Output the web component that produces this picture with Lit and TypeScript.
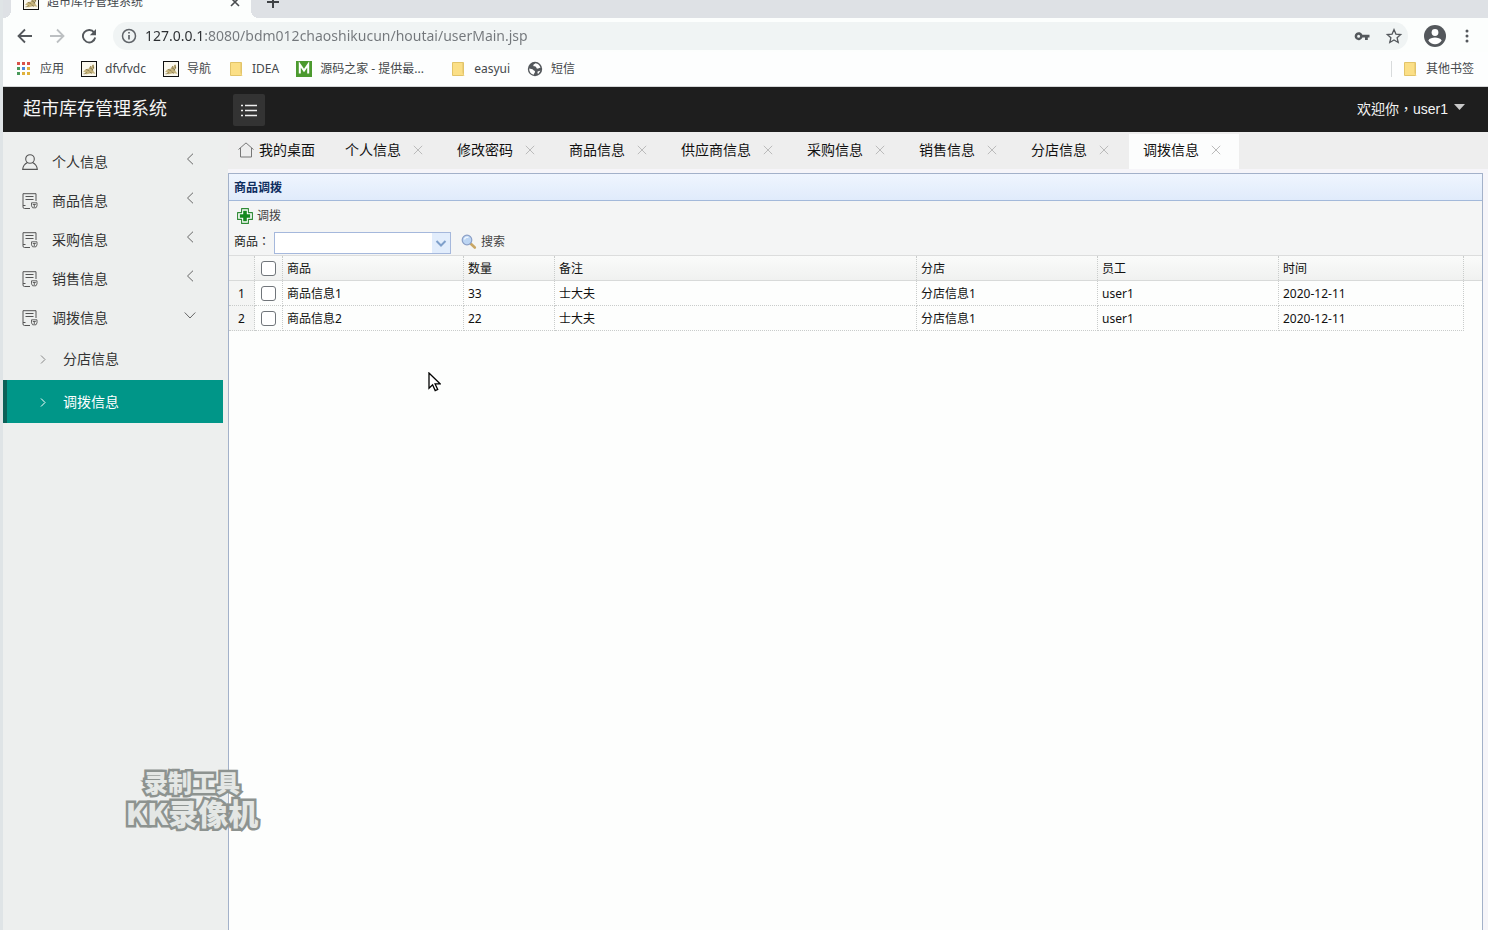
import { LitElement, html, css, svg, nothing } from "lit";
import { customElement, state } from "lit/decorators.js";
import { classMap } from "lit/directives/class-map.js";

const cat = html`<svg class="i16" viewBox="0 0 16 16" aria-hidden="true">
  <rect x="0.5" y="0.5" width="15" height="15" fill="#faf8ee" stroke="#111" />
  <path d="M2 11 4.500 8.200l3.600-.6 1.200-2.800 1 1 1.500-2.400 1 .3.500 3.600-1.300 1.500.6 1.500 1.900 2.400-3.400-.4-2.400.2-2.800.8L3.500 13l1.200-1.700z" fill="#c6b47c" />
  <path d="M2.500 12.800c1.500.2 2.200-.8 3.500-1.300M8.500 10.800l2.500 1.600M9.600 5.200l-.8 2.400M11.800 4l.7 2.500M5 8.400l3.200 1.200" fill="none" stroke="#85754a" stroke-width=".8" />
  <path d="M9.600 7.400h1M11.900 6.800h.9M10.700 8.800h1.300" stroke="#4a4330" stroke-width=".8" />
</svg>`;

const folder = html`<svg class="i16" viewBox="0 0 16 16" aria-hidden="true">
  <path d="M2.500 1.500h11v13h-11z" fill="#fbdf86" stroke="#e2c469" />
  <path d="M12.500 2v9.500l1.500 3" fill="none" stroke="#edd079" />
</svg>`;

const appsColors = ["#d9534a", "#d9534a", "#d9534a", "#4a9a5b", "#4a86d9", "#e0b23c", "#4a9a5b", "#e0b23c", "#e0b23c"];
const apps = html`<svg class="i16" viewBox="0 0 16 16" aria-hidden="true">
  ${appsColors.map((c, i) => svg`<rect x=${1 + (i % 3) * 5} y=${1 + Math.floor(i / 3) * 5} width="3" height="3" fill=${c} />`)}
</svg>`;

const mark = html`<svg class="i16" viewBox="0 0 16 16" aria-hidden="true">
  <rect width="16" height="16" fill="#4c9a2f" />
  <path d="M3.800 12.500v-9l4.200 6 4.200-6v9" fill="none" stroke="#fff" stroke-width="2" />
</svg>`;

const globe = html`<svg class="i16" viewBox="0 0 16 16" aria-hidden="true">
  <circle cx="8" cy="8" r="7.200" fill="#54585c" />
  <path d="M2.200 7.500C3.500 8 5.500 7.800 6.300 9s1.700.3 1.700 1.800-1 1.200-1.300 3C4 13 2 11 2.200 7.500zM8.500 2.200c-.6 1-2.500.8-2.200 2.300s1.700.6 2.600 1.200-.2 1.600 1.300 1.900 1.600-1.100 3.300-.8C13 4.500 11.200 2.600 8.500 2.200zM11 10.200c1 .2 1.600-.4 2.300-.6-.3 1.300-1.200 2.500-2.300 3.300-.6-1-.8-2 0-2.700z" fill="#fff" />
</svg>`;

const userIcon = html`<svg class="i16" viewBox="0 0 16 16" aria-hidden="true" fill="none" stroke="#555" stroke-width="1.100">
  <circle cx="8" cy="5" r="4.300" />
  <path d="M5.500 8.600C3 9.800 1 12 .7 15.400h14.600C15 12 13 9.800 10.500 8.600" />
</svg>`;

const formIcon = html`<svg class="i16" viewBox="0 0 16 16" aria-hidden="true" fill="none" stroke="#555">
  <path d="M8 15.500H2.500a1.500 1.500 0 0 1-1.500-1.500V.7h13V8M3.500 3.500h8M3.500 6.500h8M1 12.500h2.500" />
  <path d="M9.500 9.800h5.500v3l-1 2h-3.400l-1.100-2zM10.800 11.500h3M12.300 11.500v2.500" stroke-width=".9" />
</svg>`;

const chevron = (d: string) => html`<svg class="i12" viewBox="0 0 12 12" aria-hidden="true" fill="none" stroke="currentColor"><path d=${d} /></svg>`;
const LEFT = "M9 .7 3.500 6 9 11.300";
const DOWN = "M.7 3.500 6 9l5.300-5.500";
const RIGHT = "M4 2.500 8 6.500 4 10.500";

const bookmarks = [
  { icon: apps, text: "应用" },
  { icon: cat, text: "dfvfvdc" },
  { icon: cat, text: "导航" },
  { icon: folder, text: "IDEA" },
  { icon: mark, text: "源码之家 - 提供最...", wide: true },
  { icon: folder, text: "easyui" },
  { icon: globe, text: "短信" },
];

const menu = [
  { text: "个人信息", icon: userIcon },
  { text: "商品信息", icon: formIcon },
  { text: "采购信息", icon: formIcon },
  { text: "销售信息", icon: formIcon },
  { text: "调拨信息", icon: formIcon, children: ["分店信息", "调拨信息"] },
];

const tabs = ["个人信息", "修改密码", "商品信息", "供应商信息", "采购信息", "销售信息", "分店信息", "调拨信息"];
const columns = ["商品", "数量", "备注", "分店", "员工", "时间"];
const rows = [
  ["商品信息1", "33", "士大夫", "分店信息1", "user1", "2020-12-11"],
  ["商品信息2", "22", "士大夫", "分店信息1", "user1", "2020-12-11"],
];

@customElement("app-root")
export class AppRoot extends LitElement {
  static styles = css`
    :host {
      display: flex;
      flex-direction: column;
      position: relative;
      box-sizing: border-box;
      min-height: 100vh;
      padding-left: 3px;
      background: #dfe4e6;
      color: #222;
      font: 12px/16px "Noto Sans", "Noto Sans CJK SC", sans-serif;
      overflow: hidden;
    }
    *, *::before, *::after { box-sizing: border-box; }
    button, input, select { font: inherit; color: inherit; margin: 0; padding: 0; border: 0; background: none; }
    a { color: inherit; text-decoration: none; }
    button { display: flex; align-items: center; cursor: pointer; white-space: nowrap; }
    svg { display: block; flex: none; }
    .i16 { width: 16px; height: 16px; }
    .i12 { width: 12px; height: 12px; }

    .strip { display: flex; align-items: flex-end; height: 18px; overflow: hidden; background: #dee1e5; }
    .corner { width: 8px; height: 8px; background: radial-gradient(circle at 0 0, transparent 8px, #fcfefd 8px); }
    .corner-right { background: radial-gradient(circle at 100% 0, transparent 8px, #fcfefd 8px); }
    .page-tab { display: flex; align-items: center; gap: 8px; width: 240px; height: 34px; padding: 2px 10px 0 12px; background: #fcfefd; color: #45494d; }
    .page-tab .label { flex: 1; }
    .new-tab { width: 20px; height: 34px; margin-left: 4px; padding-top: 2px; }
    .toolbar { display: flex; align-items: center; height: 34px; padding: 2px 13px 0 14px; gap: 16px; background: #fcfefd; }
    .address { display: flex; flex: 1; align-items: center; height: 28px; padding: 0 0 0 8px; gap: 8px; border-radius: 14px; background: #f0f4f4; }
    .nav { display: flex; gap: 16px; }
    .url { flex: 1; min-width: 0; height: 24px; font-size: 14px; line-height: 24px; outline: 0; color: transparent; background: linear-gradient(90deg, #2b2e31 60px, #73777b 60px); -webkit-background-clip: text; background-clip: text; }
    .right { display: flex; align-items: center; gap: 8px; }
    .bookmarks { display: flex; align-items: center; height: 35px; padding: 0 14px 0 13px; gap: 17px; background: #fdfefe; border-bottom: 1px solid #d5d7d8; color: #45484b; }
    .bookmark { display: flex; align-items: center; gap: 8px; white-space: nowrap; }
    .wide { width: 137px; }
    .other { margin-left: auto; padding-left: 10px; border-left: 1px solid #d8dbdc; }

    .header { display: flex; align-items: center; height: 45px; padding: 0 23px 0 20px; background: #1e1e1e; color: #f4f4f4; }
    .brand { width: 210px; margin: 0; padding-bottom: 4px; font-size: 18px; line-height: 24px; font-weight: 400; }
    .toggle { justify-content: center; width: 32px; height: 32px; border-radius: 2px; background: #333; }
    .user { margin-left: auto; padding-bottom: 2px; gap: 6px; font-family: "Liberation Sans", "Noto Sans CJK TC", sans-serif; font-size: 14px; line-height: 20px; }

    .body { display: flex; flex: 1; }
    .side { flex: none; width: 225px; padding: 10px 5px 0 0; background: #edefee; color: #333; font-size: 14px; line-height: 20px; }
    .group, .sub { display: flex; align-items: center; width: 100%; }
    .group { height: 39px; padding: 0 27px 0 19px; gap: 14px; }
    .group .label { flex: 1; text-align: left; }
    .group .arrow { padding-bottom: 5px; color: #666; }
    .sub { height: 43px; padding-left: 34px; gap: 14px; }
    .sub .arrow { color: #888; }
    .current { padding-left: 30px; border-left: 4px solid #0b6158; background: #009688; color: #fff; }
    .current .arrow { color: #fff; }

    .main { display: flex; flex: 1; flex-direction: column; min-width: 0; background: #f6f5f9; }
    .tabs { display: flex; height: 37px; padding-top: 2px; background: #eeeeee; color: #111; font-size: 14px; line-height: 20px; }
    .tab { display: flex; align-items: center; height: 35px; margin-right: 2px; padding: 0 18px 3px 14px; gap: 12px; }
    .home { padding: 0 14px 3px 10px; }
    .home button { gap: 5px; }
    .active { background: #fcfdfd; }
    .close { color: #bbb; }

    .panel { display: flex; flex: 1; flex-direction: column; margin: 4px 5px 0 0; border: 1px solid #a3b1c9; border-bottom: 0; background: #fdfefd; }
    .panel-title { height: 27px; margin: 0; padding: 6px 5px 4px; border-bottom: 1px solid #a3b9da; background: linear-gradient(#eff5fe, #e0ebfb); color: #0e2d5f; font-size: 12px; line-height: 16px; font-weight: 700; }
    .tools { padding: 2px 5px 1px; background: #f4f5f5; }
    .tool-row { display: flex; align-items: center; height: 24px; }
    .tool { padding-top: 2px; gap: 4px; color: #444; }
    .add { margin-left: 3px; }
    .search { margin-left: 10px; }
    .query { height: 27px; padding-top: 1px; }
    .query label { width: 40px; font-family: "Noto Sans CJK TC", sans-serif; }
    .combo { display: grid; align-self: flex-end; width: 177px; height: 22px; border: 1px solid #a5b8dc; background: #fff; }
    .combo select { grid-area: 1 / 1; appearance: none; width: 100%; outline: 0; }
    .combo .drop { grid-area: 1 / 1; justify-self: end; pointer-events: none; }

    .grid { display: block; color: #111; }
    .grid thead, .grid tbody { display: block; }
    .row { display: grid; grid-template-columns: 26px 28px 181fr 91fr 362fr 181fr 181fr 185fr 18px; height: 25px; }
    .head { height: 26px; border-top: 1px solid #dcdddd; border-bottom: 1px solid #d8dad9; background: linear-gradient(#fafbfa, #f0f1f0); }
    .cell { display: flex; align-items: center; min-width: 0; padding: 2px 4px 0; border: 0 dotted #c9cccb; border-width: 0 1px 1px 0; font-weight: 400; text-align: left; white-space: nowrap; }
    .head .cell { border-bottom: 0; }
    .cell:last-child { border: 0; }
    .num { justify-content: center; padding: 2px 0 0; background: #f4f5f4; }
    .pick { justify-content: center; padding: 0; }
    .check { width: 15px; height: 15px; appearance: none; border: 1px solid #70757a; border-radius: 3px; background: #fff; }
    .check:checked { background: #1a73e8; }

    .watermark { position: absolute; left: 124px; top: 766px; width: 136px; color: #e4e7e5; font: 900 24px/32px "Noto Sans CJK SC", sans-serif; text-align: center; -webkit-text-stroke: 5px #8d9390; stroke-linejoin: round; paint-order: stroke fill; pointer-events: none; }
    .watermark .big { display: block; margin-top: -2px; font-size: 30px; line-height: 32px; white-space: nowrap; }
    .cursor { position: absolute; left: 428px; top: 372px; width: 13px; height: 20px; pointer-events: none; }
  `;

  @state() private tab = "调拨信息";

  private chrome() {
    return html`
      <div class="strip">
        <span class="corner"></span>
        <div class="page-tab">${cat}<span class="label">超市库存管理系统</span>
          <button aria-label="关闭标签页"><svg class="i12" viewBox="0 0 12 12" stroke="#4a4d50" stroke-width="1.600"><path d="M2 2l8 8M10 2l-8 8" /></svg></button>
        </div>
        <span class="corner corner-right"></span>
        <button class="new-tab" aria-label="新标签页"><svg width="20" height="16" viewBox="0 0 20 16" stroke="#3f4245" stroke-width="2"><path d="M10 2v12M4 8h12" /></svg></button>
      </div>
      <div class="toolbar">
        <div class="nav">
          <button aria-label="后退"><svg class="i16" viewBox="0 0 16 16" fill="none" stroke="#54585c" stroke-width="1.800"><path d="M15 8H2M8 1.500 1.500 8 8 14.500" /></svg></button>
          <button aria-label="前进"><svg class="i16" viewBox="0 0 16 16" fill="none" stroke="#bcc0c2" stroke-width="1.800"><path d="M1 8h13M8 1.500 14.500 8 8 14.500" /></svg></button>
          <button aria-label="刷新"><svg class="i16" viewBox="0 0 16 16" fill="none" stroke="#54585c" stroke-width="1.900"><path d="M13.200 4.600A6.200 6.200 0 1 0 14.200 9.500" /><path d="M15 1v6.200H8.800z" fill="#54585c" stroke="none" /></svg></button>
        </div>
        <div class="address">
          <svg class="i16" viewBox="0 0 16 16" fill="none" stroke="#5f6368" stroke-width="1.500"><circle cx="8" cy="8" r="6.500" /><path d="M8 7v4.500M8 4v1.600" stroke-width="1.700" /></svg>
          <input class="url" type="text" aria-label="地址" .value=${"127.0.0.1:8080/bdm012chaoshikucun/houtai/userMain.jsp"} />
          <div class="right">
            <button aria-label="密码"><svg class="i16" viewBox="0 0 16 16"><path fill="#54585c" fill-rule="evenodd" d="M8.400 6.800A4 4 0 1 0 8.400 9.500H11V12h2.800V9.500H15.500V6.800zM4.600 6.700a1.500 1.500 0 1 1 0 3 1.500 1.500 0 0 1 0-3z" /></svg></button>
            <button aria-label="收藏"><svg width="30" height="16" viewBox="-8 0 30 16" fill="none" stroke="#54585c" stroke-width="1.300"><path d="M8 1.600l1.900 4.500 4.800.4-3.600 3.200 1.100 4.800L8 12l-4.200 2.500 1.100-4.800L1.300 6.500l4.800-.4z" /></svg></button>
          </div>
        </div>
        <button aria-label="用户"><svg width="22" height="22" viewBox="0 0 22 22"><circle cx="11" cy="11" r="11" fill="#54585c" /><circle cx="11" cy="7.500" r="3.400" fill="#fff" /><path d="M4.300 15.500c1-2.300 4.300-3 6.700-3s5.700.7 6.700 3a8 8 0 0 1-13.400 0z" fill="#fff" /></svg></button>
        <button aria-label="更多"><svg width="13" height="16" viewBox="0 0 13 16" fill="#54585c"><circle cx="5" cy="3" r="1.500" /><circle cx="5" cy="8" r="1.500" /><circle cx="5" cy="13" r="1.500" /></svg></button>
      </div>
      <nav class="bookmarks" aria-label="书签">
        ${bookmarks.map((b) => html`<a href="#" class=${classMap({ bookmark: true, wide: !!b.wide })}>${b.icon}<span>${b.text}</span></a>`)}
        <a href="#" class="bookmark other">${folder}<span>其他书签</span></a>
      </nav>`;
  }

  private sidebar() {
    return html`<nav class="side" aria-label="菜单">
      ${menu.map((m) => html`
        <button class="group" aria-expanded=${m.children ? "true" : "false"}>
          ${m.icon}<span class="label">${m.text}</span><span class="arrow">${chevron(m.children ? DOWN : LEFT)}</span>
        </button>
        ${m.children?.map((c) => html`<a href="#" class=${classMap({ sub: true, current: c === this.tab })}>
          <span class="arrow">${chevron(RIGHT)}</span><span>${c}</span></a>`) ?? nothing}`)}
    </nav>`;
  }

  private tabBar() {
    return html`<div class="tabs">
      <div class="tab home"><button>
        <svg class="i16" viewBox="0 0 16 16" fill="none" stroke="#777"><path d="M.5 7.500 8 .9l7.500 6.600M2.500 6v9h11V6" /></svg>我的桌面</button></div>
      ${tabs.map((t) => html`<div class=${classMap({ tab: true, active: t === this.tab })}>
        <button @click=${() => (this.tab = t)}>${t}</button>
        <button class="close" aria-label="关闭${t}"><svg width="10" height="10" viewBox="0 0 10 10" stroke="currentColor"><path d="M.8.8l8.400 8.400M9.200.8.8 9.200" /></svg></button>
      </div>`)}
    </div>`;
  }

  private table() {
    return html`<table class="grid">
      <thead>
        <tr class="row head">
          <th class="cell num"></th>
          <th class="cell pick"><input class="check" type="checkbox" aria-label="全选" /></th>
          ${columns.map((c) => html`<th class="cell">${c}</th>`)}
          <th class="cell"></th>
        </tr>
      </thead>
      <tbody>
        ${rows.map((r, i) => html`<tr class="row">
          <td class="cell num">${i + 1}</td>
          <td class="cell pick"><input class="check" type="checkbox" aria-label="选择第${i + 1}行" /></td>
          ${r.map((v) => html`<td class="cell">${v}</td>`)}
          <td class="cell"></td>
        </tr>`)}
      </tbody>
    </table>`;
  }

  render() {
    return html`
      ${this.chrome()}
      <header class="header">
        <h1 class="brand">超市库存管理系统</h1>
        <button class="toggle" aria-label="折叠菜单"><svg class="i16" viewBox="0 0 16 16" stroke="#eee" stroke-width="1.300"><path d="M0 3.500h2M4 3.500h12M0 8.500h2M4 8.500h12M0 13.500h2M4 13.500h12" /></svg></button>
        <button class="user"><span>欢迎你，user1</span><svg width="11" height="12" viewBox="0 0 11 12"><path d="M0 1h11L5.500 7z" fill="#c8c8c8" /></svg></button>
      </header>
      <div class="body">
        ${this.sidebar()}
        <main class="main">
          ${this.tabBar()}
          <section class="panel">
            <h2 class="panel-title">商品调拨</h2>
            <div class="tools">
              <div class="tool-row">
                <button class="tool add"><svg class="i16" viewBox="0 0 16 16"><path d="M4.600.6h6.800v4h4v6.800h-4v4H4.600v-4h-4V4.600h4z" fill="#fff" stroke="#2e8a35" stroke-width="1.100" stroke-linejoin="round" /><path d="M6.200 2.800h3.600v3.400h3.400v3.600H9.800v3.400H6.200V9.800H2.800V6.200h3.400z" fill="#15891f" /></svg>调拨</button>
              </div>
              <div class="tool-row query">
                <label for="goods">商品：</label>
                <div class="combo">
                  <select id="goods"><option value=""></option><option>商品信息1</option><option>商品信息2</option></select>
                  <svg class="drop" width="18" height="20" viewBox="0 0 18 20"><rect width="18" height="20" fill="#e2edfc" /><path d="M4.500 8 9 12.500 13.500 8" fill="none" stroke="#7fa0cb" stroke-width="2" /></svg>
                </div>
                <button class="tool search"><svg class="i16" viewBox="0 0 16 16"><path d="M9.800 9.800l4 3.700" stroke="#c9a765" stroke-width="2.600" stroke-linecap="round" /><circle cx="6" cy="6" r="4.800" fill="#bcd5f3" stroke="#8b9fc6" stroke-width="1.200" /><path d="M3.400 5.500C4 3.500 6 2.800 7.500 3.400" fill="none" stroke="#eef6ff" stroke-width="1.400" /></svg>搜索</button>
              </div>
            </div>
            ${this.table()}
          </section>
        </main>
      </div>
      <div class="watermark"><span>录制工具</span><span class="big">KK录像机</span></div>
      <svg class="cursor" viewBox="0 0 13 20"><path d="M1 1v15.200l3.600-3.400 2.600 5.800 2.500-1.100-2.600-5.600h5z" fill="#fff" stroke="#000" stroke-width="1.300" /></svg>`;
  }
}
